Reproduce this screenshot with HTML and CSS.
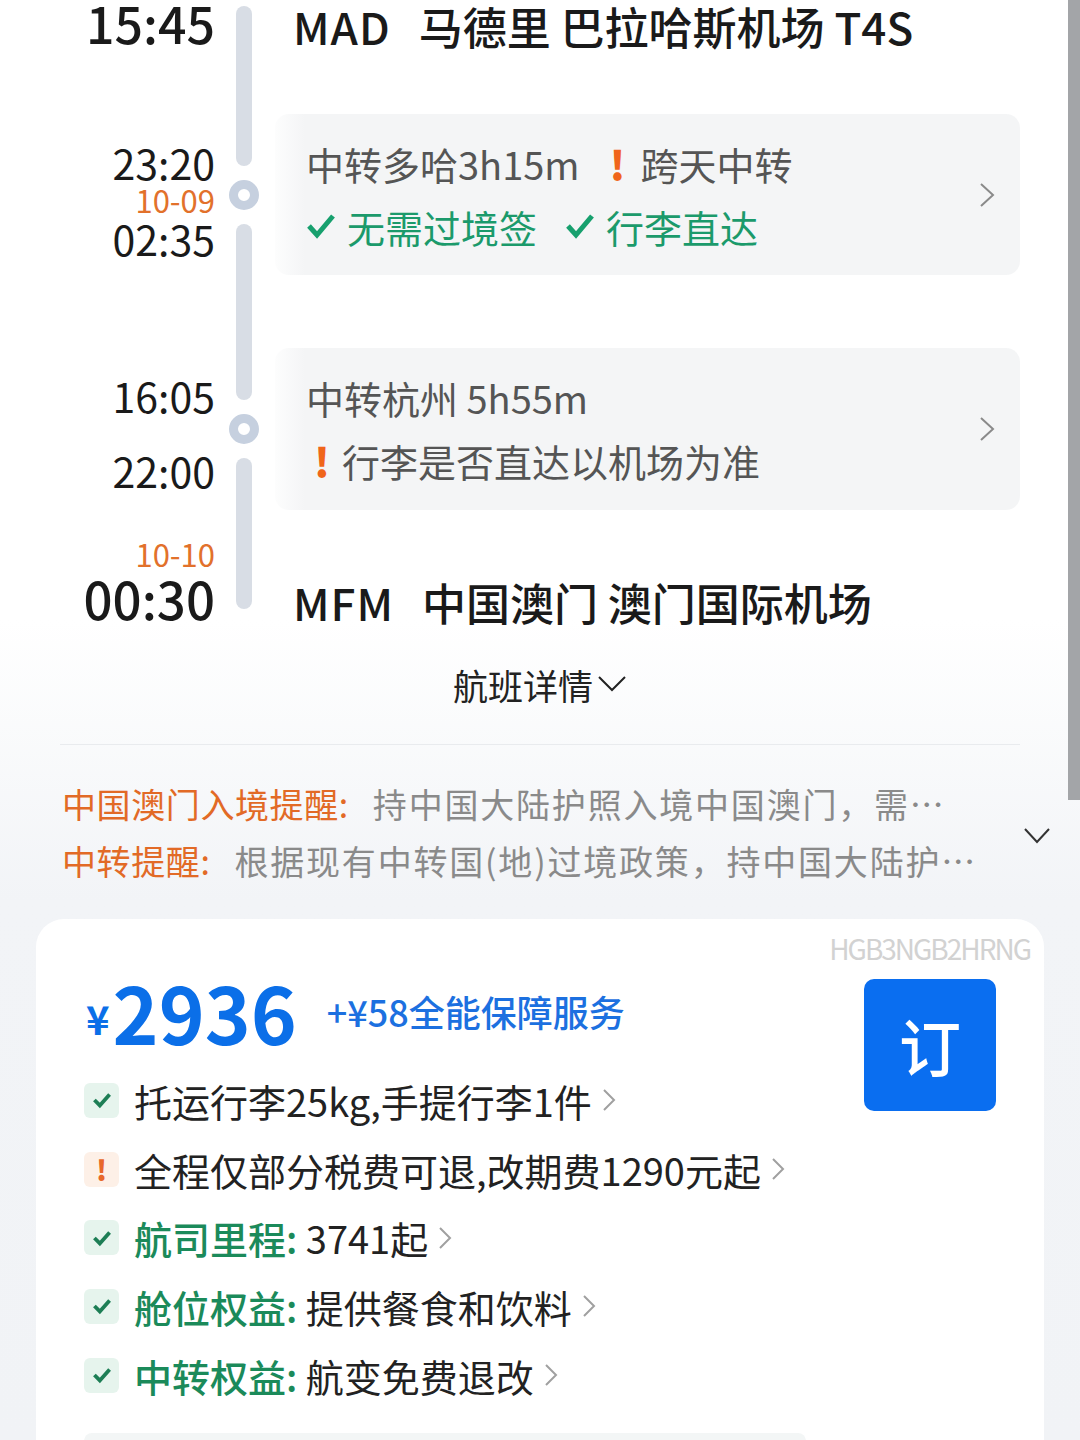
FILE: index.html
```html
<!DOCTYPE html>
<html lang="zh-CN">
<head>
  <meta charset="UTF-8">
  <title>航班详情</title>
  <link rel="stylesheet" href="styles.css">
</head>
<body>

<div class="scrollbar"></div>

<section class="route">
  <div class="track">
    <span class="seg seg-1"></span>
    <span class="ring"></span>
    <span class="seg seg-2"></span>
    <span class="ring"></span>
    <span class="seg seg-3"></span>
  </div>

  <!-- 出发 -->
  <div class="times row-dep">
    <div class="time time-big">15:45</div>
  </div>
  <div class="place row-dep"><span class="code">MAD</span>马德里 巴拉哈斯机场 T4S</div>

  <!-- 中转 1 -->
  <div class="times row-stop1">
    <div class="time">23:20</div>
    <div class="date">10-09</div>
    <div class="time">02:35</div>
  </div>
  <div class="card row-stop1">
    <div class="card-lines">
      <div class="line">中转多哈3h15m<span class="warn">!</span>跨天中转</div>
      <div class="line ok">
        <svg class="tick" viewBox="0 0 30 30"><path d="M3 15 L11 24 L27 5"/></svg>无需过境签
        <svg class="tick tick-2" viewBox="0 0 30 30"><path d="M3 15 L11 24 L27 5"/></svg>行李直达
      </div>
    </div>
    <svg class="arrow" viewBox="0 0 16 26"><path d="M2 2 L14 13 L2 24"/></svg>
  </div>

  <!-- 中转 2 -->
  <div class="times row-stop2">
    <div class="time">16:05</div>
    <div class="time time-gap">22:00</div>
  </div>
  <div class="card row-stop2">
    <div class="card-lines">
      <div class="line">中转杭州 5h55m</div>
      <div class="line"><span class="warn warn-lead">!</span>行李是否直达以机场为准</div>
    </div>
    <svg class="arrow" viewBox="0 0 16 26"><path d="M2 2 L14 13 L2 24"/></svg>
  </div>

  <!-- 到达 -->
  <div class="times row-arr">
    <div class="date">10-10</div>
    <div class="time time-arr">00:30</div>
  </div>
  <div class="place place-arr row-arr"><span class="code">MFM</span>中国澳门 澳门国际机场</div>
</section>

<div class="details">航班详情<svg class="down" viewBox="0 0 30 20"><path d="M2 3 L15 16 L28 3"/></svg></div>
<div class="divider"></div>

<div class="notices">
  <div class="notice-lines">
    <div class="notice"><span class="notice-title">中国澳门入境提醒:</span>持中国大陆护照入境中国澳门，需⋯</div>
    <div class="notice"><span class="notice-title">中转提醒:</span>根据现有中转国(地)过境政策，持中国大陆护⋯</div>
  </div>
  <svg class="down down-dark" viewBox="0 0 28 18"><path d="M2 2 L14 15 L26 2"/></svg>
</div>

<section class="offer">
  <div class="offer-code">HGB3NGB2HRNG</div>
  <div class="offer-body">
    <div class="offer-main">
      <div class="price-row">
        <span class="yen">¥</span><span class="price">2936</span>
        <span class="addon">+¥58全能保障服务</span>
      </div>
      <ul class="perks">
        <li class="perk">
          <span class="perk-icon"><svg viewBox="0 0 24 24"><path d="M5 12 L10 17 L19 7"/></svg></span>
          托运行李25kg,手提行李1件
          <svg class="more" viewBox="0 0 14 24"><path d="M2 2 L12 12 L2 22"/></svg>
        </li>
        <li class="perk">
          <span class="perk-icon perk-warn">!</span>
          全程仅部分税费可退,改期费1290元起
          <svg class="more" viewBox="0 0 14 24"><path d="M2 2 L12 12 L2 22"/></svg>
        </li>
        <li class="perk">
          <span class="perk-icon"><svg viewBox="0 0 24 24"><path d="M5 12 L10 17 L19 7"/></svg></span>
          <span class="label">航司里程:</span>&nbsp;3741起
          <svg class="more" viewBox="0 0 14 24"><path d="M2 2 L12 12 L2 22"/></svg>
        </li>
        <li class="perk">
          <span class="perk-icon"><svg viewBox="0 0 24 24"><path d="M5 12 L10 17 L19 7"/></svg></span>
          <span class="label">舱位权益:</span>&nbsp;提供餐食和饮料
          <svg class="more" viewBox="0 0 14 24"><path d="M2 2 L12 12 L2 22"/></svg>
        </li>
        <li class="perk">
          <span class="perk-icon"><svg viewBox="0 0 24 24"><path d="M5 12 L10 17 L19 7"/></svg></span>
          <span class="label">中转权益:</span>&nbsp;航变免费退改
          <svg class="more" viewBox="0 0 14 24"><path d="M2 2 L12 12 L2 22"/></svg>
        </li>
      </ul>
      <div class="next-strip"></div>
    </div>
    <button class="book-btn">订</button>
  </div>
</section>

</body>
</html>
```

FILE: styles.css
```css
body {
  margin: 0;
  width: 1080px;
  height: 1440px;
  overflow: hidden;
  position: relative;
  font-family: "Noto Sans CJK SC", "Noto Sans", sans-serif;
  color: #1a1a1a;
  background: linear-gradient(#fff 0, #fff 620px, #f2f4f7 900px, #f1f3f6 100%);
}

.scrollbar {
  position: absolute;
  top: 0;
  right: 0;
  width: 12px;
  height: 800px;
  background: #a3a5a8;
}

/* 航线时间轴 */
.route {
  display: grid;
  grid-template-columns: 215px 60px 745px;
  grid-template-rows: 114px 161px 73px 162px 120px;
}

.track {
  grid-column: 2;
  grid-row: 1 / 6;
  display: flex;
  flex-direction: column;
  align-items: center;
  gap: 14px;
  padding: 6px 2px 0 0;
}

.seg {
  width: 16px;
  border-radius: 8px;
  background: #d8dde5;
}

.seg-1 { height: 160px; }
.seg-2 { height: 176px; }
.seg-3 { height: 151px; }

.ring {
  width: 12px;
  height: 12px;
  border: 9px solid #c6d0df;
  border-radius: 50%;
  background: #fff;
}

.row-dep { grid-row: 1; }
.row-stop1 { grid-row: 2; }
.row-stop2 { grid-row: 4; }
.row-arr { grid-row: 5; }

.times {
  grid-column: 1;
  text-align: right;
  padding-top: 26px;
}

.row-dep.times { padding-top: 0; }
.row-stop2.times { padding-top: 25px; }
.row-arr.times { padding-top: 28px; }

.time {
  font-size: 41px;
  line-height: 44px;
  color: #1a1a1a;
}

.time-big {
  font-size: 50px;
  font-weight: 500;
}

.time-gap { margin-top: 31px; }

.time-arr {
  font-size: 51px;
  line-height: 56px;
  font-weight: 500;
}

.date {
  font-size: 31px;
  line-height: 32px;
  color: #e2712b;
}

.place {
  grid-column: 3;
  padding: 4px 0 0 18px;
  font-size: 44px;
  line-height: 44px;
  font-weight: 500;
  color: #1a1a1a;
  white-space: nowrap;
}

.place-arr { padding-top: 70px; }

.code {
  margin-right: 28px;
  letter-spacing: 1px;
}

/* 中转卡片 */
.card {
  grid-column: 3;
  display: flex;
  align-items: center;
  padding: 0 25px 0 31px;
  border-radius: 14px;
  background: linear-gradient(90deg, rgba(244, 245, 246, 0.2) 0, #f4f5f6 30px);
}

.card-lines {
  flex: 1;
  font-size: 38px;
  line-height: 63px;
  color: #555;
}

.line {
  display: flex;
  align-items: center;
  white-space: nowrap;
}

.line.ok { color: #1b9a6b; }

.warn {
  color: #f0651a;
  font-weight: 900;
  font-size: 40px;
  margin: 0 15px 0 30px;
}

.warn-lead { margin: 0 12px 0 8px; }

.tick {
  width: 30px;
  height: 30px;
  margin-right: 11px;
  fill: none;
  stroke: #17a06e;
  stroke-width: 5;
}

.tick-2 { margin-left: 28px; }

.arrow {
  width: 16px;
  height: 26px;
  fill: none;
  stroke: #8a8a8a;
  stroke-width: 2;
}

/* 航班详情 */
.details {
  height: 114px;
  box-sizing: border-box;
  padding-bottom: 6px;
  display: flex;
  justify-content: center;
  align-items: center;
  font-size: 35px;
  color: #222;
}

.down {
  width: 30px;
  height: 20px;
  margin-left: 4px;
  fill: none;
  stroke: #222;
  stroke-width: 2;
}

.divider {
  height: 1px;
  margin: 0 60px;
  background: #e9ebee;
}

/* 提醒 */
.notices {
  display: flex;
  align-items: center;
  padding: 30px 29px 0 62px;
}

.notice-lines { flex: 1; }

.notice {
  font-size: 34px;
  line-height: 57px;
  color: #8a8a8a;
  letter-spacing: 1.8px;
  white-space: nowrap;
}

.notice-title {
  color: #e26a26;
  letter-spacing: 0.6px;
  margin-right: 24px;
}

.down-dark {
  width: 28px;
  height: 18px;
  stroke: #333;
  margin-top: 8px;
}

/* 价格卡片 */
.offer {
  margin: 30px 36px 0;
  padding: 14px 14px 0 48px;
  height: 600px;
  border-radius: 28px;
  background: #fff;
}

.offer-code {
  text-align: right;
  font-size: 28px;
  line-height: 30px;
  letter-spacing: -2px;
  color: #d2d2d2;
}

.offer-body {
  display: flex;
  justify-content: space-between;
  align-items: flex-start;
}

.price-row {
  display: flex;
  align-items: center;
  height: 82px;
  padding-top: 7px;
  margin-bottom: 14px;
  line-height: 82px;
  color: #0b6fe8;
}

.yen {
  font-size: 40px;
  font-weight: 700;
  margin: 14px 0 0 2px;
}

.price {
  font-size: 78px;
  font-weight: 700;
  margin-left: 3px;
}

.addon {
  font-size: 36px;
  font-weight: 500;
  margin-left: 30px;
  color: #1c70e0;
}

.perks {
  list-style: none;
  margin: 0;
  padding: 0;
}

.perk {
  display: flex;
  align-items: center;
  height: 68.7px;
  font-size: 38px;
  color: #222;
  white-space: nowrap;
}

.perk-icon {
  width: 35px;
  height: 35px;
  margin-right: 15px;
  border-radius: 6px;
  background: #e6f4ed;
  display: flex;
  justify-content: center;
  align-items: center;
}

.perk-icon svg {
  width: 26px;
  height: 26px;
  fill: none;
  stroke: #1d7e55;
  stroke-width: 3.5;
}

.perk-warn {
  background: #fdf0e7;
  color: #e8682a;
  font-size: 28px;
  font-weight: 900;
}

.label {
  color: #1b8a5a;
  font-weight: 500;
}

.more {
  width: 14px;
  height: 24px;
  margin-left: 10px;
  fill: none;
  stroke: #a0a0a0;
  stroke-width: 2;
}

.next-strip {
  width: 722px;
  height: 20px;
  margin-top: 24px;
  border-radius: 8px;
  background: #f3f6f6;
}

.book-btn {
  width: 132px;
  height: 132px;
  margin: 16px 34px 0 0;
  border: none;
  border-radius: 10px;
  background: #0a6ef0;
  color: #fff;
  font-family: "Noto Sans CJK SC", sans-serif;
  font-size: 62px;
  font-weight: 500;
  cursor: pointer;
}
```
